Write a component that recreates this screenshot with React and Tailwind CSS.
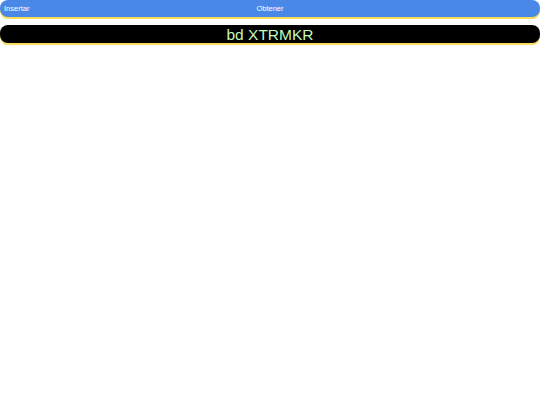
export default function App() {
  return (
    <div className="w-full min-h-[405px] bg-white" style={{ fontFamily: '"Liberation Sans", Arial, sans-serif' }}>
      <nav className="grid grid-cols-3 items-center h-[17px] bg-[#4a88e8] rounded-lg shadow-[0_2px_0_#f5dc5a] text-white text-[7.5px] px-1">
        <span className="text-left">Insertar</span>
        <span className="text-center">Obtener</span>
        <span />
      </nav>
      <h1 className="mt-[8px] h-[18px] bg-black rounded-lg shadow-[0_2px_1px_#f5dc5a] text-center text-[15.5px] leading-[19px] text-[#c2f8b8]">
        bd XTRMKR
      </h1>
    </div>
  );
}
